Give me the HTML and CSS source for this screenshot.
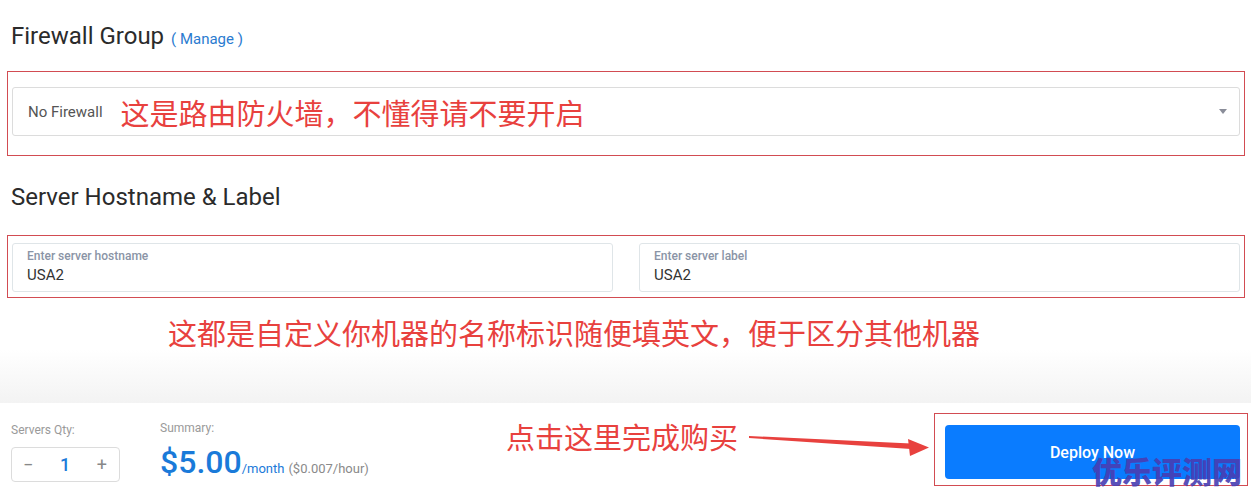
FILE: index.html
```html
<!DOCTYPE html>
<html lang="zh-CN">
<head>
<meta charset="utf-8">
<title>Deploy</title>
<link rel="stylesheet" href="styles.css">
</head>
<body>
<div class="page">
  <h2 class="title">Firewall Group <a class="manage">( Manage )</a></h2>
  <div class="mark-box fw-box">
    <div class="select">
      <span class="select-text">No Firewall</span>
      <span class="note note-inline">这是路由防火墙，不懂得请不要开启</span>
      <span class="caret"></span>
    </div>
  </div>

  <h2 class="title title-2">Server Hostname &amp; Label</h2>
  <div class="mark-box name-box">
    <div class="field">
      <div class="field-label">Enter server hostname</div>
      <div class="field-value">USA2</div>
    </div>
    <div class="field">
      <div class="field-label">Enter server label</div>
      <div class="field-value">USA2</div>
    </div>
  </div>
  <div class="note note-block">这都是自定义你机器的名称标识随便填英文，便于区分其他机器</div>

  <div class="fade"></div>

  <div class="bar">
    <div class="qty-col">
      <div class="small-label">Servers Qty:</div>
      <div class="qty">
        <span class="qty-btn">&minus;</span>
        <span class="qty-num">1</span>
        <span class="qty-btn">+</span>
      </div>
    </div>
    <div class="sum-col">
      <div class="small-label">Summary:</div>
      <div class="price"><span class="price-big">$5.00</span><span class="price-unit">/month</span> <span class="price-hour">($0.007/hour)</span></div>
    </div>
    <div class="note note-buy">点击这里完成购买</div>
    <svg class="arrow" width="184" height="30" viewBox="0 0 184 30">
      <polygon points="1,7 163,14.5 163,20 1,9" fill="#e8413e"/>
      <polygon points="160,10 181,18.5 162,27" fill="#e8413e"/>
    </svg>
    <div class="mark-box deploy-box">
      <button class="deploy">Deploy Now</button>
      <span class="watermark">优乐评测网</span>
    </div>
  </div>
</div>
</body>
</html>
```
FILE: styles.css
```css
html, body {
  margin: 0;
  padding: 0;
  background: #ffffff;
}
body {
  font-family: Roboto, "Noto Sans", "Noto Sans CJK SC", sans-serif;
  width: 1251px;
  height: 495px;
  overflow: hidden;
}
.page {
  display: flex;
  flex-direction: column;
}
.title {
  margin: 23px 0 0 11px;
  font-size: 24px;
  line-height: 26px;
  font-weight: 400;
  color: #2b2b2b;
}
.title-2 {
  margin-top: 28px;
}
.manage {
  font-size: 15px;
  color: #2a7bd0;
  margin-left: 1px;
}
.mark-box {
  border: 1px solid #d24c52;
}
.fw-box {
  margin: 19px 6px 0 7px;
  padding: 15px 4px 19px 4px;
}
.select {
  height: 47px;
  border: 1px solid #dcdcdc;
  border-radius: 3px;
  display: flex;
  align-items: center;
  padding: 0 12px 0 15px;
}
.select-text {
  font-size: 15px;
  color: #555;
}
.note {
  font-family: "Noto Sans CJK SC", sans-serif;
  font-size: 29px;
  line-height: 36px;
  color: #e8413e;
  white-space: nowrap;
}
.note-inline {
  margin-left: 18px;
}
.caret {
  margin-left: auto;
  width: 0;
  height: 0;
  border-left: 4px solid transparent;
  border-right: 4px solid transparent;
  border-top: 5px solid #8a8d99;
}
.name-box {
  margin: 25px 6px 0 7px;
  padding: 7px 4px 5px 4px;
  display: grid;
  grid-template-columns: 1fr 1fr;
  column-gap: 26px;
}
.field {
  height: 42px;
  border: 1px solid #dfe5e8;
  border-radius: 3px;
  padding: 5px 14px 0 14px;
}
.field-label {
  font-size: 12px;
  line-height: 14px;
  font-weight: 500;
  color: #8a94a6;
  margin-bottom: 3px;
}
.field-value {
  font-size: 15px;
  line-height: 18px;
  color: #333;
}
.note-block {
  margin: 16px 0 0 168px;
}
.fade {
  height: 53px;
  background: linear-gradient(#ffffff, #f3f3f3);
}
.bar {
  height: 92px;
  background: #ffffff;
  display: flex;
  align-items: flex-start;
  padding-left: 11px;
}
.small-label {
  font-size: 12px;
  line-height: 14px;
  color: #9a9a9a;
}
.qty-col {
  padding-top: 20px;
}
.qty {
  margin-top: 10px;
  width: 109px;
  height: 35px;
  border: 1px solid #dcdcdc;
  border-radius: 4px;
  display: flex;
  align-items: center;
  justify-content: space-between;
  padding: 0 12px 0 11px;
  box-sizing: border-box;
}
.qty-btn {
  font-size: 18px;
  color: #888;
}
.qty-num {
  font-size: 18px;
  font-weight: 500;
  color: #1a7ad9;
}
.sum-col {
  margin-left: 40px;
  padding-top: 18px;
}
.price {
  margin-top: 7px;
  line-height: 40px;
  white-space: nowrap;
}
.price-big {
  font-size: 32px;
  font-weight: 500;
  color: #1a7ad9;
}
.price-unit {
  font-size: 13px;
  color: #1a7ad9;
}
.price-hour {
  font-size: 13px;
  color: #8a8a8a;
}
.note-buy {
  margin: 15px 0 0 auto;
}
.arrow {
  margin: 26px 0 0 10px;
  display: block;
}
.deploy-box {
  margin: 10px 3px 0 2px;
  padding: 11px 7px 6px 10px;
  position: relative;
}
.deploy {
  display: block;
  width: 295px;
  height: 54px;
  border: none;
  border-radius: 4px;
  background: #0a7cff;
  color: #ffffff;
  font-family: Roboto, sans-serif;
  font-size: 16px;
  font-weight: 500;
  padding: 0;
}
.watermark {
  position: absolute;
  left: 157px;
  top: 41px;
  font-family: "Noto Sans CJK SC", sans-serif;
  font-size: 30px;
  line-height: 30px;
  font-weight: 900;
  color: rgba(72, 62, 178, 0.92);
  white-space: nowrap;
}
```
